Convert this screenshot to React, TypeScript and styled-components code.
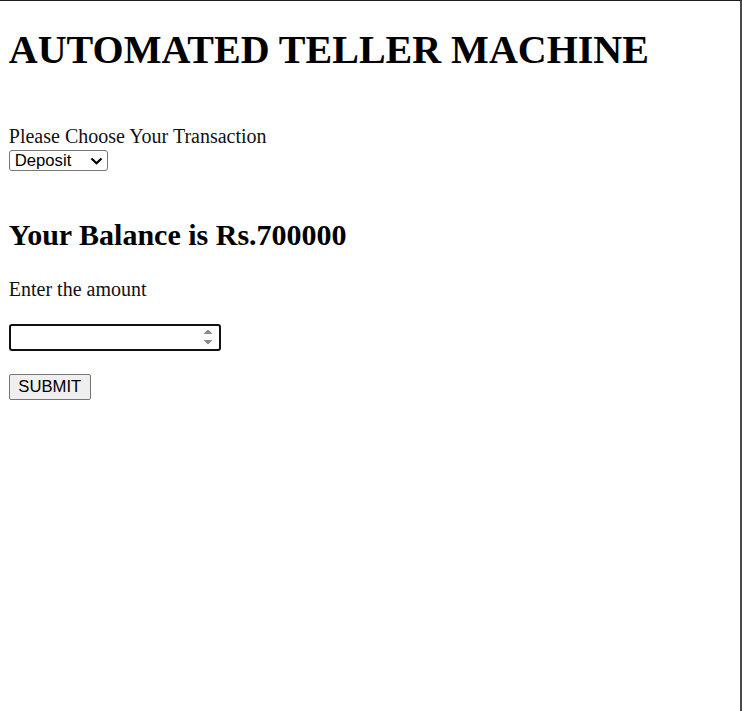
import React, { useState } from "react";
import styled, { createGlobalStyle } from "styled-components";

const Global = createGlobalStyle`
  html, body { margin: 0; padding: 0; background: #fff; }
  body { font-family: "Liberation Serif", "Times New Roman", serif; font-size: 20px; color: #000; }
  * { box-sizing: border-box; }
`;

const Frame = styled.div`
  min-height: 100vh;
  width: 742px;
  border-top: 1px solid #1c1c1c;
  border-right: 2px solid #4a4a4a;
  padding: 0 8.8px;
  display: flex;
  flex-direction: column;
  align-items: flex-start;
`;

const Title = styled.h1`
  margin: 25.5px 0 0;
  font-size: 40px;
  font-weight: bold;
  line-height: 46px;
`;

const Label = styled.label`
  margin-top: 52.3px;
  font-size: 20px;
  line-height: 23px;
  color: #111;
`;

const chevron =
  "data:image/svg+xml;utf8," +
  encodeURIComponent(
    '<svg xmlns="http://www.w3.org/2000/svg" width="13" height="8" viewBox="0 0 13 8"><path d="M1.5 1.5 L6.5 6.2 L11.5 1.5" fill="none" stroke="#000" stroke-width="2.2"/></svg>'
  );

const Select = styled.select`
  margin-top: 2.2px;
  width: 99px;
  height: 21.5px;
  font-family: "Liberation Sans", Arial, sans-serif;
  font-size: 16.67px;
  color: #000;
  background: #fff url("${chevron}") no-repeat right 4px center / 13px 8px;
  appearance: none;
  -webkit-appearance: none;
  border: 1px solid #767676;
  border-radius: 3px;
  padding: 0 0 0 5px;
  line-height: 19px;
`;

const Balance = styled.h2`
  margin: 46.1px 0 0;
  font-size: 30px;
  font-weight: bold;
  line-height: 34.5px;
`;

const Text = styled.p`
  margin: 25.7px 0 0;
  font-size: 20px;
  line-height: 23px;
  color: #111;
`;

const AmountInput = styled.input`
  margin-top: 23.2px;
  width: 212px;
  height: 27px;
  border: 2px solid #101010;
  border-radius: 3px;
  outline: none;
  padding: 1px 3px;
  font-family: "Liberation Sans", Arial, sans-serif;
  font-size: 16.67px;
  background: #fff;
  caret-color: #000;
`;

const SubmitButton = styled.button`
  margin-top: 23px;
  width: 82px;
  height: 26px;
  font-family: "Liberation Sans", Arial, sans-serif;
  font-size: 16.67px;
  color: #000;
  background: #efefef;
  border: 1px solid #767676;
  border-radius: 2px;
  padding: 0 6px;
`;

export default function App() {
  const [type, setType] = useState("deposit");
  return (
    <>
      <Global />
      <Frame>
        <Title>AUTOMATED TELLER MACHINE</Title>
        <Label htmlFor="txn">Please Choose Your Transaction</Label>
        <Select id="txn" value={type} onChange={(e) => setType(e.target.value)}>
          <option value="deposit">Deposit</option>
          <option value="withdraw">Withdraw</option>
        </Select>
        <Balance>Your Balance is Rs.700000</Balance>
        <Text>Enter the amount</Text>
        <AmountInput type="number" autoFocus />
        <SubmitButton type="button">SUBMIT</SubmitButton>
      </Frame>
    </>
  );
}
